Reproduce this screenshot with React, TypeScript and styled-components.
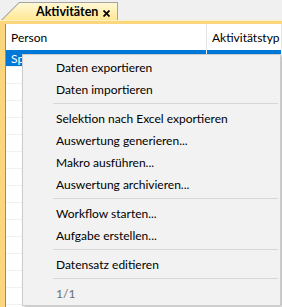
import React from "react";
import styled, { createGlobalStyle } from "styled-components";

const GlobalStyle = createGlobalStyle`
  html, body { margin: 0; padding: 0; background: #f0f0f0; }
  body {
    font-family: Lato, "Noto Sans", sans-serif;
    font-size: 12px;
    color: #000;
  }
`;

const Window = styled.div`
  position: relative;
  width: 282px;
  height: 307px;
  overflow: hidden;
  display: flex;
  flex-direction: column;
  background: #f0f0f0;
`;

const TabStrip = styled.div`
  flex: none;
  height: 20px;
  display: flex;
  align-items: flex-end;
  padding-left: 1px;
`;

const Tab = styled.div`
  width: 117px;
  height: 18px;
  box-sizing: border-box;
  padding: 1px 1px 0 1px;
  display: flex;
  background: #a3a3a3;
  clip-path: polygon(18px 0, 100% 0, 100% 100%, 0 100%);
`;

const TabFace = styled.div`
  flex: 1;
  display: flex;
  align-items: center;
  padding-left: 34px;
  padding-right: 7px;
  background: linear-gradient(#fff8d6, #ffe893);
  clip-path: polygon(17.4px 0, 100% 0, 100% 100%, 0.4px 100%);
`;

const TabLabel = styled.span`
  font-weight: 700;
  font-size: 12.5px;
  line-height: 14px;
`;

const CloseIcon = styled.svg`
  margin-left: auto;
  margin-top: 4px;
  width: 7px;
  height: 7px;
  flex: none;
`;

const Band = styled.div`
  flex: none;
  height: 3px;
  border-top: 1px solid #fff1c2;
  background: #fbd67d;
`;

const Body = styled.div`
  flex: 1;
  display: flex;
  min-height: 0;
`;

const SideStrip = styled.div`
  flex: none;
  width: 5px;
  background: #fbd67d;
  border-right: 1px solid #8e8e8e;
`;

const Grid = styled.div`
  flex: 1;
  display: flex;
  flex-direction: column;
  background: #fff;
  overflow: hidden;
`;

const HeaderRow = styled.div`
  flex: none;
  height: 26px;
  display: grid;
  grid-template-columns: 201px 1fr;
`;

const HeaderCell = styled.div`
  display: flex;
  align-items: center;
  padding-left: 5px;
  border-right: 1px solid #e5e5e5;
  white-space: nowrap;
  overflow: hidden;
`;

const Row = styled.div<{ $selected?: boolean }>`
  flex: none;
  height: 16px;
  display: grid;
  grid-template-columns: 201px 1fr;
  border-bottom: 1px solid #f0f0f0;
  background: ${(p) => (p.$selected ? "#0078d7" : "#fff")};
  color: ${(p) => (p.$selected ? "#fff" : "#000")};
`;

const Cell = styled.div`
  display: flex;
  align-items: center;
  padding-left: 5px;
  border-right: 1px solid #f0f0f0;
  white-space: nowrap;
  overflow: hidden;
`;

const Menu = styled.div`
  position: absolute;
  left: 22px;
  top: 54px;
  width: 259px;
  box-sizing: border-box;
  padding: 1px 0;
  background: #f2f2f2;
  border: 1px solid #cccccc;
  box-shadow: 2px 2px 3px rgba(0, 0, 0, 0.22);
  display: flex;
  flex-direction: column;
`;

const MenuItem = styled.div<{ $disabled?: boolean }>`
  height: 22px;
  display: flex;
  align-items: center;
  padding-left: 33px;
  white-space: nowrap;
  color: ${(p) => (p.$disabled ? "#6d6d6d" : "#000")};
`;

const MenuSeparator = styled.div`
  height: 7px;
  display: flex;
  align-items: center;
  padding-left: 30px;
  padding-right: 2px;
  &::after {
    content: "";
    flex: 1;
    height: 1px;
    background: #d7d7d7;
  }
`;

type Entry = { label: string; disabled?: boolean } | "sep";

const entries: Entry[] = [
  { label: "Daten exportieren" },
  { label: "Daten importieren" },
  "sep",
  { label: "Selektion nach Excel exportieren" },
  { label: "Auswertung generieren..." },
  { label: "Makro ausführen..." },
  { label: "Auswertung archivieren..." },
  "sep",
  { label: "Workflow starten..." },
  { label: "Aufgabe erstellen..." },
  "sep",
  { label: "Datensatz editieren" },
  "sep",
  { label: "1/1", disabled: true },
];

export default function App() {
  const rows = Array.from({ length: 15 }, (_, i) => i);
  return (
    <>
      <GlobalStyle />
      <Window>
        <TabStrip>
          <Tab>
            <TabFace>
              <TabLabel>Aktivitäten</TabLabel>
              <CloseIcon viewBox="0 0 7 7">
                <path d="M0.5 0.5 L6.5 6.5 M6.5 0.5 L0.5 6.5" stroke="#000" strokeWidth="1.7" />
              </CloseIcon>
            </TabFace>
          </Tab>
        </TabStrip>
        <Band />
        <Body>
          <SideStrip />
          <Grid>
            <HeaderRow>
              <HeaderCell>Person</HeaderCell>
              <HeaderCell>Aktivitätstyp</HeaderCell>
            </HeaderRow>
            {rows.map((i) => (
              <Row key={i} $selected={i === 0}>
                <Cell>{i === 0 ? "Sp" : ""}</Cell>
                <Cell />
              </Row>
            ))}
          </Grid>
        </Body>
        <Menu>
          {entries.map((e, i) =>
            e === "sep" ? (
              <MenuSeparator key={i} />
            ) : (
              <MenuItem key={i} $disabled={e.disabled}>
                {e.label}
              </MenuItem>
            )
          )}
        </Menu>
      </Window>
    </>
  );
}
